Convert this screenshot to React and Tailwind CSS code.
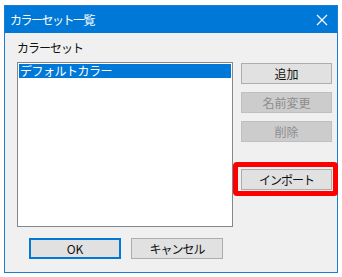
import React from "react";

const font = { fontFamily: '"Noto Sans CJK JP", "Noto Sans", sans-serif' };

function Btn({ children, disabled, className = "" }) {
  return (
    <div
      className={
        "flex items-center justify-center h-[21px] w-[91px] text-[12px] leading-none border " +
        (disabled
          ? "bg-[#cccccc] border-[#bfbfbf] text-[#8d8d8d] "
          : "bg-[#e1e1e1] border-[#adadad] text-[#111] ") +
        className
      }
    >
      {children}
    </div>
  );
}

export default function App() {
  return (
    <div className="relative w-[342px] h-[277px] bg-white overflow-hidden" style={font}>
      <div className="ml-[4px] mt-[5px] w-[334px] h-[268px] border border-[#1a7fd4] flex flex-col bg-[#f0f0f0]">
        <div className="h-[27px] bg-[#0078d7] flex items-center justify-between pl-[5px] pr-[9px] shrink-0">
          <span className="text-white text-[12px] leading-none tracking-[-1.5px]">カラーセット一覧</span>
          <svg width="12" height="12" viewBox="0 0 12 12">
            <path d="M1 1 L11 11 M11 1 L1 11" stroke="white" strokeWidth="1.2" fill="none" />
          </svg>
        </div>
        <div className="flex-1 flex flex-col">
          <div className="ml-[12px] mt-[8px] h-[14px] text-[12px] leading-[14px] text-[#111] tracking-[-1px]">カラーセット</div>
          <div className="flex mt-[7px] ml-[12px]">
            <div className="w-[216px] h-[165px] bg-white border border-[#828790] p-[1px]">
              <div className="h-[14px] bg-[#0078d7] text-white text-[12px] leading-[14px] pl-[1px] tracking-[-0.5px]">デフォルトカラー</div>
            </div>
            <div className="ml-[8px] mt-[1px] flex flex-col">
              <Btn>追加</Btn>
              <Btn disabled className="mt-[8px]">名前変更</Btn>
              <Btn disabled className="mt-[8px]">削除</Btn>
              <Btn className="mt-[27px] h-[19px] tracking-[-1px]">インポート</Btn>
            </div>
          </div>
          <div className="flex ml-[24px] mt-[11px]">
            <div className="flex items-center justify-center h-[21px] w-[92px] text-[12px] leading-none bg-[#e1e1e1] border-2 border-[#0078d7] text-[#111]">OK</div>
            <Btn className="ml-[10px] w-[92px] tracking-[-1px]">キャンセル</Btn>
          </div>
        </div>
      </div>
      <div className="absolute left-[233px] top-[162px] w-[105px] h-[34px] border-[5px] border-[#ff0000] rounded-[4px]" />
    </div>
  );
}
